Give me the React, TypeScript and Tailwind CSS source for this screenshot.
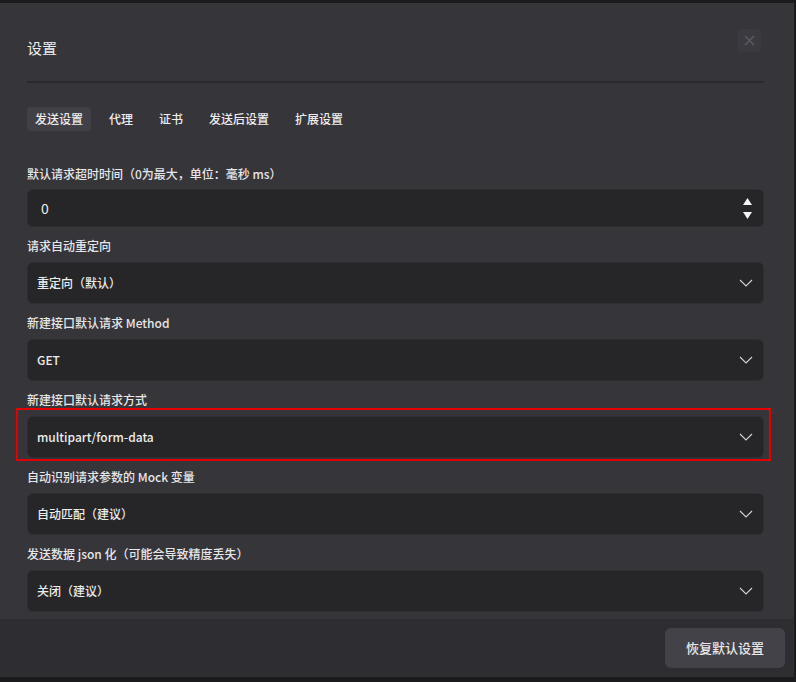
const font = { fontFamily: '"Microsoft YaHei", "Noto Sans CJK SC", "Liberation Sans", sans-serif' }

const tabs = ['发送设置', '代理', '证书', '发送后设置', '扩展设置']

function Chevron() {
  return (
    <svg width="14" height="8" viewBox="0 0 14 8" fill="none" className="shrink-0">
      <path d="M1 1L7 7L13 1" stroke="#d4d4d6" strokeWidth="1.1" />
    </svg>
  )
}

function Select({ value }: { value: string }) {
  return (
    <div className="h-[42px] flex items-center justify-between pl-[9px] pr-[10px] bg-[#262628] border border-[#2e2e31] rounded-[6px]">
      <span className="text-[12px] font-medium text-[#ececec]">{value}</span>
      <Chevron />
    </div>
  )
}

function Label({ children, first }: { children: React.ReactNode; first?: boolean }) {
  return (
    <div className={`h-[16px] leading-[16px] text-[12px] font-medium text-[#e6e6e8] ${first ? 'mb-[7px]' : 'mt-[11px] mb-[8px]'}`}>
      {children}
    </div>
  )
}

export default function App() {
  return (
    <div className="w-[796px] h-[682px] bg-[#1b1b1d] flex flex-col overflow-hidden" style={font}>
      <div className="h-[3px] shrink-0" />
      <div className="w-[794px] h-[674px] bg-[#36353a] flex flex-col">
        <div className="flex-1 pl-[27px] pr-[30px] relative">
          <div className="pt-[36px] h-[58px] text-[15px] leading-[18px] text-[#ececee]">设置</div>
          <button className="absolute top-[26px] right-[33px] w-[23px] h-[23px] rounded-[4px] bg-[#3b3a40] flex items-center justify-center">
            <svg width="11" height="11" viewBox="0 0 11 11">
              <path d="M1 1L10 10M10 1L1 10" stroke="#5c5b60" strokeWidth="1.5" />
            </svg>
          </button>
          <div className="mt-[20px] h-[2px] bg-[#2b2b2e]" />
          <div className="mt-[24px] flex gap-[10px]">
            {tabs.map((t, i) => (
              <div
                key={t}
                className={`h-[24px] px-[8px] flex items-center rounded-[3px] text-[12px] font-medium text-[#ececee] ${i === 0 ? 'bg-[#414046]' : ''}`}
              >
                {t}
              </div>
            ))}
          </div>
          <div className="mt-[35px]">
            <Label first>默认请求超时时间（0为最大，单位：毫秒 ms）</Label>
            <div className="h-[38px] flex items-center justify-between pl-[13px] pr-[11px] bg-[#262628] border border-[#2e2e31] rounded-[6px]">
              <span className="text-[14px] text-[#ececec]">0</span>
              <div className="flex flex-col gap-[7px] items-center">
                <svg width="9" height="7" viewBox="0 0 9 7"><path d="M4.5 0L9 7H0Z" fill="#f4f4f4" /></svg>
                <svg width="9" height="7" viewBox="0 0 9 7"><path d="M0 0H9L4.5 7Z" fill="#f4f4f4" /></svg>
              </div>
            </div>
            <Label>请求自动重定向</Label>
            <Select value="重定向（默认）" />
            <Label>新建接口默认请求 Method</Label>
            <Select value="GET" />
            <Label>新建接口默认请求方式</Label>
            <div className="relative">
              <Select value="multipart/form-data" />
              <div className="absolute -left-[11px] -right-[7px] -top-[8px] -bottom-[3px] border-2 border-[#e50000]" />
            </div>
            <Label>自动识别请求参数的 Mock 变量</Label>
            <Select value="自动匹配（建议）" />
            <Label>发送数据 json 化（可能会导致精度丢失）</Label>
            <Select value="关闭（建议）" />
          </div>
        </div>
        <div className="h-[58px] shrink-0 bg-[#2e2d32] flex items-center justify-end pr-[9px]">
          <button className="w-[120px] h-[40px] rounded-[6px] bg-[#434248] text-[13px] font-medium text-[#e8e8ea]">
            恢复默认设置
          </button>
        </div>
      </div>
    </div>
  )
}
